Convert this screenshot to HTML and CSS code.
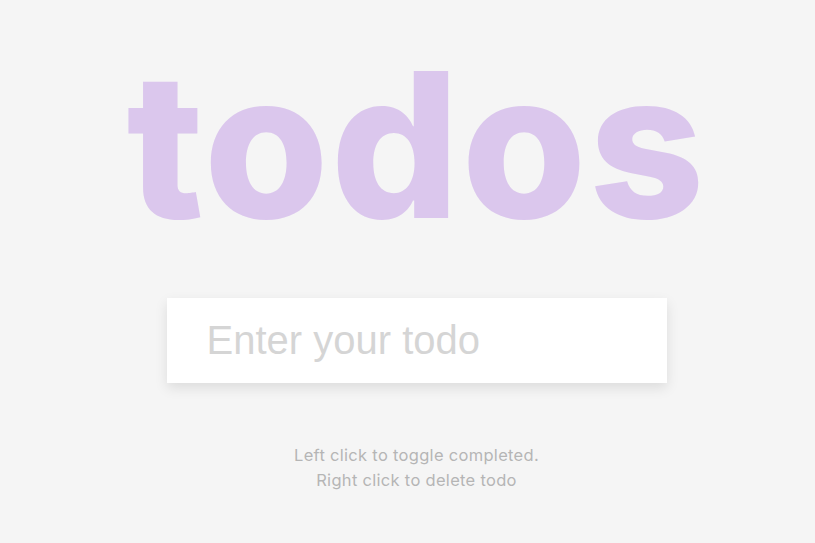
FILE: index.html
```html
<!DOCTYPE html>
<html lang="en">
<head>
<meta charset="UTF-8">
<title>Todo List</title>
<link rel="stylesheet" href="styles.css">
</head>
<body>
  <main class="app">
    <h1 class="title">todos</h1>
    <form class="todo-form" onsubmit="return false">
      <input type="text" class="todo-input" placeholder="Enter your todo" autocomplete="off">
      <ul class="todos"></ul>
    </form>
    <small class="hint">Left click to toggle completed. <br> Right click to delete todo</small>
  </main>
</body>
</html>
```
FILE: styles.css
```css
* {
  box-sizing: border-box;
}

body {
  margin: 0;
  background-color: #f5f5f5;
  font-family: Inter, "Noto Sans", sans-serif;
}

.app {
  display: flex;
  flex-direction: column;
  align-items: center;
  padding-top: 45px;
  padding-left: 18px;
}

.title {
  margin: 0;
  font-family: Inter, "Noto Sans", sans-serif;
  font-weight: 800;
  font-size: 202px;
  line-height: 200px;
  letter-spacing: 2px;
  color: #dbc7ed;
  text-align: center;
}

.todo-form {
  margin-top: 53px;
  width: 500px;
  box-shadow: 0 5px 12px rgba(0, 0, 0, 0.1);
}

.todo-input {
  display: block;
  width: 100%;
  border: none;
  outline: none;
  background: #fff;
  color: #444;
  font-family: "Liberation Sans", Arial, sans-serif;
  font-size: 40px;
  padding: 20px 40px;
}

.todo-input::placeholder {
  color: #d5d5d5;
}

.todos {
  margin: 0;
  padding: 0;
  list-style: none;
}

.hint {
  display: block;
  margin-top: 60px;
  color: #b5b5b5;
  font-family: Inter, "Noto Sans", sans-serif;
  font-size: 16.5px;
  letter-spacing: 0.3px;
  line-height: 25px;
  text-align: center;
}
```
